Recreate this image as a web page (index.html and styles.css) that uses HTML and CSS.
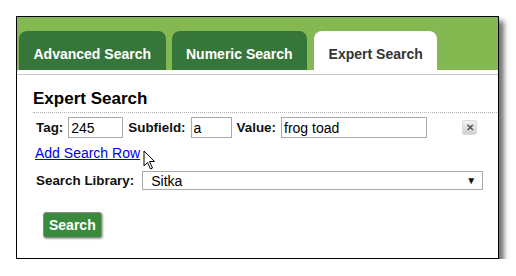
FILE: index.html
```html
<!DOCTYPE html>
<html lang="en">
<head>
    <meta charset="UTF-8">
    <title>Expert Search</title>
    <link rel="stylesheet" href="styles.css">
</head>
<body>
    <div class="panel">
        <div class="tabs">
            <div class="tab">Advanced Search</div>
            <div class="tab">Numeric Search</div>
            <div class="tab active">Expert Search</div>
        </div>
        <main class="content">
            <h2 class="title">Expert Search</h2>
            <div class="row">
                <label class="lbl">Tag:</label>
                <input class="field tag" type="text" value="245">
                <label class="lbl">Subfield:</label>
                <input class="field sub" type="text" value="a">
                <label class="lbl">Value:</label>
                <input class="field val" type="text" value="frog toad">
                <span class="remove">&#x2715;</span>
            </div>
            <a class="add-row" href="#">Add Search Row</a>
            <div class="lib-row">
                <label class="lbl">Search Library:</label>
                <div class="select">
                    <span>Sitka</span>
                    <span class="arrow">&#9660;</span>
                </div>
            </div>
            <button class="search-btn">Search</button>
        </main>
        <svg class="cursor" width="14" height="21" viewBox="0 0 14 21">
            <path d="M1 1 L1 16 L4.5 12.5 L7.5 19 L9.5 18 L6.5 11.5 L11.5 11.5 Z" fill="#fff" stroke="#000" stroke-width="1" stroke-linejoin="miter"/>
        </svg>
    </div>
</body>
</html>
```

FILE: styles.css
```css
body {
    margin: 0;
    background: #fff;
    font-family: "Liberation Sans", Arial, sans-serif;
}
.panel {
    position: relative;
    margin: 16px 0 0 16px;
    width: 481px;
    height: 241px;
    border: 1px solid #000;
    background: #fff;
    box-shadow: 5px 5px 5px rgba(0, 0, 0, 0.55);
}
.tabs {
    display: flex;
    gap: 6px;
    height: 39px;
    padding: 14px 0 0 2px;
    background: #84b851;
}
.tab {
    padding: 7px 14.5px 0;
    height: 32px;
    line-height: 32px;
    font-size: 14px;
    font-weight: bold;
    color: #fff;
    background: #37763a;
    border-radius: 8px 8px 0 0;
}
.tab.active {
    margin-left: 1px;
    background: #fff;
    color: #333;
}
.content {
    margin-top: 4px;
    border-top: 1px solid #c8c8c8;
    padding: 14px 1px 0 16px;
}
.title {
    margin: 0;
    font-size: 17px;
    line-height: 20px;
    padding-bottom: 3px;
    border-bottom: 1px dotted #b0b0b0;
    color: #000;
}
.row {
    display: flex;
    align-items: center;
    margin: 4px 0 0 3px;
    height: 21px;
}
.lbl {
    font-size: 13.4px;
    font-weight: bold;
    color: #111;
    margin-right: 5px;
}
.field {
    box-sizing: border-box;
    height: 21px;
    margin: 0 5px 0 0;
    padding: 0 2px;
    border: 1px solid #a9a9a9;
    font-family: "Liberation Sans", Arial, sans-serif;
    font-size: 14px;
    color: #000;
}
.tag { width: 55px; }
.sub { width: 41px; }
.val { width: 146px; }
.remove {
    box-sizing: border-box;
    width: 15px;
    height: 15px;
    margin-left: 30px;
    font-size: 10px;
    font-weight: bold;
    line-height: 14px;
    text-align: center;
    color: #555;
    background: linear-gradient(#f2f2f2, #d0d0d0);
    border: 1px solid #dcdcdc;
    border-radius: 2px;
}
.add-row {
    display: inline-block;
    margin: 7px 0 0 2px;
    font-size: 14px;
    line-height: 16px;
    color: #0000ee;
}
.lib-row {
    display: flex;
    align-items: center;
    margin: 9px 0 0 3px;
}
.lib-row .lbl {
    margin-right: 8px;
}
.select {
    box-sizing: border-box;
    display: flex;
    justify-content: space-between;
    align-items: center;
    width: 341px;
    height: 19px;
    padding: 0 6px 0 8px;
    border: 1px solid #a9a9a9;
    font-size: 14px;
    color: #000;
}
.arrow {
    font-size: 10px;
    color: #111;
}
.search-btn {
    display: block;
    margin: 22px 0 0 10px;
    height: 26px;
    padding: 0 5px;
    font-family: "Liberation Sans", Arial, sans-serif;
    font-size: 14px;
    font-weight: bold;
    color: #fff;
    background: #3a8a3c;
    border: 1px solid #8a8a8a;
    border-radius: 3px;
    box-shadow: 1px 1px 2px rgba(0, 0, 0, 0.35);
}
.cursor {
    position: absolute;
    left: 126px;
    top: 133px;
}
```
